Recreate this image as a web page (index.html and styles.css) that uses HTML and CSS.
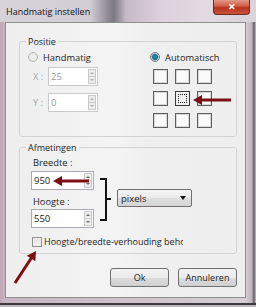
FILE: index.html
```html
<!DOCTYPE html>
<html lang="nl">
<head>
    <meta charset="UTF-8">
    <meta name="viewport" content="width=device-width, initial-scale=1.0">
    <title>Handmatig instellen</title>
    <link rel="stylesheet" href="styles.css">
</head>
<body>

<div class="window">
    <div class="titlebar">
        <span class="title">Handmatig instellen</span>
        <button class="close" type="button">✕</button>
    </div>

    <div class="client">
        <fieldset class="group positie">
            <legend>Positie</legend>
            <div class="cols">
                <div class="col-left">
                    <label class="radio disabled"><span class="dot"></span>Handmatig</label>
                    <div class="field disabled">
                        <span class="field-label">X :</span>
                        <div class="spin small"><span class="value">25</span><span class="arrows"><i class="up"></i><i class="down"></i></span></div>
                    </div>
                    <div class="field disabled second">
                        <span class="field-label">Y :</span>
                        <div class="spin small"><span class="value">0</span><span class="arrows"><i class="up"></i><i class="down"></i></span></div>
                    </div>
                </div>
                <div class="col-right">
                    <label class="radio checked"><span class="dot"></span>Automatisch</label>
                    <div class="anchor-grid">
                        <span></span><span></span><span></span>
                        <span></span><span class="selected"></span><span></span>
                        <span></span><span></span><span></span>
                    </div>
                </div>
            </div>
        </fieldset>

        <fieldset class="group afmetingen">
            <legend>Afmetingen</legend>
            <div class="cols">
                <div class="size-col">
                    <div class="size-label">Breedte :</div>
                    <div class="spin"><span class="value">950</span><span class="arrows"><i class="up"></i><i class="down"></i></span></div>
                    <div class="size-label second">Hoogte :</div>
                    <div class="spin tight"><span class="value">550</span><span class="arrows"><i class="up"></i><i class="down"></i></span></div>
                </div>
                <div class="select">
                    <span>pixels</span>
                    <span class="caret"></span>
                </div>
            </div>
            <label class="check"><span class="box"></span><span class="check-text">Hoogte/breedte-verhouding behouden</span></label>
        </fieldset>

        <div class="buttons">
            <button type="button">Ok</button>
            <button type="button">Annuleren</button>
        </div>
    </div>

    <!-- rode pijlen en haak uit de uitleg -->
    <svg class="marks" width="256" height="307" viewBox="0 0 256 307">
        <g stroke="#7b0f12" stroke-width="3" fill="#7b0f12">
            <line x1="231" y1="100" x2="200" y2="100"/>
            <polygon points="193,100 202,95 202,105" stroke="none"/>
            <line x1="89" y1="181" x2="60" y2="181"/>
            <polygon points="53,181 62,176 62,186" stroke="none"/>
            <line x1="15" y1="283" x2="32" y2="257"/>
            <polygon points="36,251 35.3,261.3 26.9,255.8" stroke="none"/>
        </g>
        <g stroke="#111" stroke-width="2" fill="none">
            <polyline points="100,179 106,179 106,220 100,220"/>
            <line x1="106" y1="199" x2="111" y2="199"/>
        </g>
    </svg>
</div>

</body>
</html>
```

FILE: styles.css
```css
* {
    box-sizing: border-box;
}

body {
    margin: 0;
    font-family: "Open Sans", "Noto Sans", sans-serif;
    font-size: 9px;
    color: #1c1c1c;
}

.window {
    position: relative;
    width: 256px;
    height: 307px;
    overflow: hidden;
    background: linear-gradient(90deg, #bfa7b6 0, #c9b4c2 5px, #d6cfd4 246px, #b9b4b8 252px, #5a5a5e 254px, #cfc9cc 256px);
    box-shadow: inset 0 -2px 0 #bdb6ba, inset 0 -4px 0 #3c3b40;
}

.titlebar {
    height: 22px;
    display: flex;
    align-items: flex-start;
    padding: 0 6px;
    background: linear-gradient(90deg, #d8d3db 0, #d2ccd5 90px, #8f8b94 108px, #7c7882 114px, #c6bac6 126px, #ddd0dc 160px, #e2dae2 205px, #d9d4d9 256px);
}

.title {
    margin-top: 5px;
    line-height: 14px;
    font-size: 9px;
    color: #111;
}

.close {
    margin-left: auto;
    width: 37px;
    height: 15px;
    padding: 0;
    border: 1px solid #6e2a22;
    border-top: none;
    border-radius: 0 0 4px 4px;
    background: linear-gradient(#e19a88, #cf5a43 45%, #b8321f 55%, #c9553c);
    color: #fff;
    font-size: 9px;
    font-weight: bold;
    line-height: 13px;
}

.client {
    margin: 0 10px 0 5px;
    height: 276px;
    border: 1px solid #8e8e8e;
    background: linear-gradient(90deg, #eeeeee, #f4f4f4 45%, #efefef 60%, #eeeeee);
}

.group {
    margin: 0 8px 0 13px;
    padding: 0;
    border: 1px solid #d3d3d3;
    border-radius: 3px;
}

.group legend {
    margin-left: 6px;
    padding: 0 2px;
    line-height: 13px;
    font-size: 9px;
}

.positie {
    margin-top: 12px;
    padding-bottom: 8px;
}

.afmetingen {
    margin-top: 4px;
    padding-bottom: 5px;
}

.cols {
    display: flex;
}

.col-left {
    width: 130px;
    padding-left: 8px;
}

.radio {
    display: flex;
    align-items: center;
    gap: 5px;
    height: 14px;
    margin-top: 2px;
    font-size: 9.3px;
    white-space: nowrap;
}

.radio .dot {
    flex: none;
    width: 10px;
    height: 10px;
    border-radius: 50%;
    border: 1px solid #7a7a7a;
    background: radial-gradient(circle, #f8f8f8 40%, #dcdcdc);
}

.radio.disabled .dot {
    border-color: #b4b4b4;
    background: radial-gradient(circle, #f4f4f4, #e2e2e2);
}

.radio.checked .dot {
    background: radial-gradient(circle, #2a8fb0 0, #1f6f8f 2.5px, #9ac6d6 3.5px, #e8e8e8 4px);
}

.field {
    display: flex;
    margin-top: 3px;
    height: 19px;
}

.field.second {
    margin-top: 7px;
}

.field-label {
    width: 15px;
    margin-left: 5px;
    line-height: 19px;
    font-size: 9.3px;
    color: #a6a6a6;
}

.spin {
    display: flex;
    width: 63px;
    height: 19px;
    margin-top: 2px;
    padding: 1px;
    border: 1px solid #a9abb2;
    background: #fff;
}

.spin.small {
    width: 50px;
    margin-top: 0;
    border-color: #c9cacd;
}

.spin.tight {
    margin-top: 1px;
}

.spin .value {
    flex: 1;
    padding-left: 1px;
    line-height: 15px;
    font-size: 9.5px;
}

.disabled .value {
    color: #9a9a9a;
}

.spin .arrows {
    display: flex;
    flex-direction: column;
    width: 8px;
    border: 1px solid #c8c8c8;
    background: #eeeeee;
}

.spin .arrows i {
    flex: 1;
    display: flex;
    align-items: center;
    justify-content: center;
}

.spin .arrows i + i {
    border-top: 1px solid #c8c8c8;
}

.spin .arrows .up::before,
.spin .arrows .down::before {
    content: "";
    border-left: 2px solid transparent;
    border-right: 2px solid transparent;
}

.spin .arrows .up::before {
    border-bottom: 2px solid #666;
}

.spin .arrows .down::before {
    border-top: 2px solid #666;
}

.disabled .arrows .up::before {
    border-bottom-color: #aaa;
}

.disabled .arrows .down::before {
    border-top-color: #aaa;
}

.anchor-grid {
    display: grid;
    grid-template-columns: repeat(3, 15px);
    grid-auto-rows: 15px;
    gap: 7px;
    margin: 5px 0 0 3px;
}

.anchor-grid span {
    border: 1px solid #5e5e5e;
    background: #fafafa;
    box-shadow: inset 0 0 0 1px #d8d8d8;
}

.anchor-grid .selected {
    border-color: #3a3a3a;
    background: #f0f0f0;
    box-shadow: none;
    position: relative;
}

.anchor-grid .selected::after {
    content: "";
    position: absolute;
    inset: 2px;
    border: 1px dotted #222;
}

.size-col {
    width: 75px;
    padding-left: 11px;
}

.size-label {
    margin: 2px 0 0 2px;
    line-height: 13px;
    font-size: 9.3px;
}

.size-label.second {
    margin-top: 5px;
}

.select {
    display: flex;
    align-items: center;
    justify-content: space-between;
    width: 75px;
    height: 18px;
    margin: 35px 0 0 22px;
    padding: 0 5px 0 3px;
    border: 1px solid #707070;
    border-radius: 2px;
    background: linear-gradient(#f4f4f4, #ebebeb 50%, #dedede 51%, #d4d4d4);
    font-size: 9.5px;
}

.select .caret {
    border-left: 3px solid transparent;
    border-right: 3px solid transparent;
    border-top: 4px solid #111;
}

.check {
    display: flex;
    align-items: center;
    height: 13px;
    margin-top: 7px;
    padding-left: 12px;
    font-size: 9px;
}

.check .box {
    flex: none;
    width: 10px;
    height: 10px;
    border: 1px solid #8f8f8f;
    background: linear-gradient(135deg, #dedede, #f6f6f6);
    box-shadow: inset 0 0 0 1px #f0f0f0;
}

.check-text {
    width: 139px;
    margin-left: 2px;
    white-space: nowrap;
    overflow: hidden;
}

.buttons {
    display: flex;
    justify-content: flex-end;
    gap: 9px;
    margin-top: 14px;
    padding-right: 8px;
}

.buttons button {
    width: 59px;
    height: 19px;
    padding: 0;
    border: 1px solid #707070;
    border-radius: 3px;
    background: linear-gradient(#f2f2f2, #ebebeb 50%, #dddddd 51%, #cfcfcf);
    font-family: inherit;
    font-size: 9px;
    color: #1c1c1c;
}

.marks {
    position: absolute;
    top: 0;
    left: 0;
    pointer-events: none;
}
```
